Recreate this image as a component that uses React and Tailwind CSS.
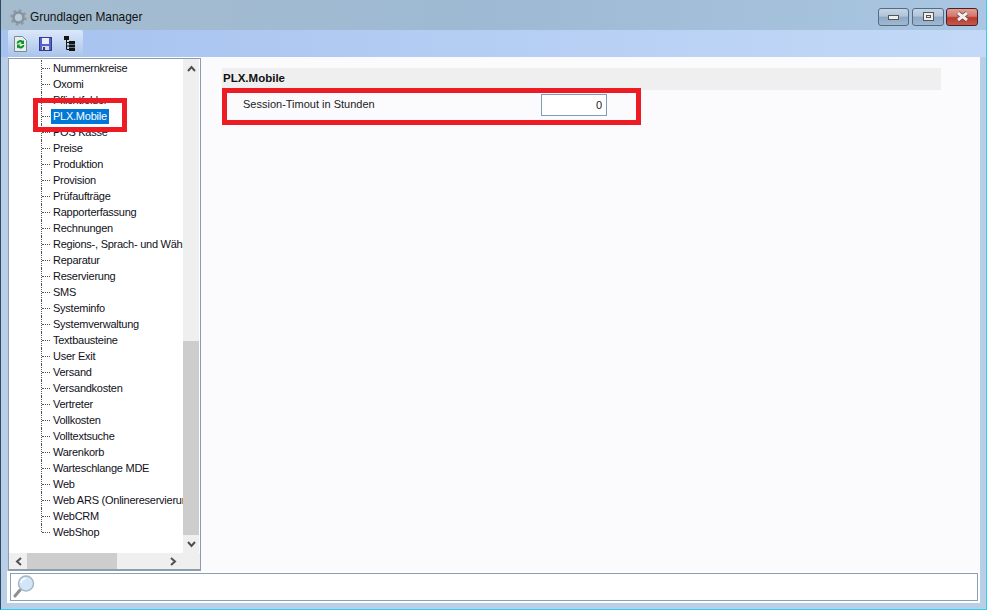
import React from "react";

const rows = [
  "Nummernkreise", "Oxomi", "Pflichtfelder", "PLX.Mobile", "POS Kasse", "Preise", "Produktion",
  "Provision", "Prüfaufträge", "Rapporterfassung", "Rechnungen", "Regions-, Sprach- und Währungen",
  "Reparatur", "Reservierung", "SMS", "Systeminfo", "Systemverwaltung", "Textbausteine", "User Exit",
  "Versand", "Versandkosten", "Vertreter", "Vollkosten", "Volltextsuche", "Warenkorb",
  "Warteschlange MDE", "Web", "Web ARS (Onlinereservierung)", "WebCRM", "WebShop",
];

const Gear = () => (
  <svg width="17" height="17" viewBox="0 0 17 17">
    <circle cx="8.500" cy="8.500" r="7" fill="none" stroke="#8f9ba7" strokeWidth="2.500" strokeDasharray="2.750 2.750" />
    <circle cx="8.500" cy="8.500" r="5" fill="none" stroke="#87939f" strokeWidth="2.500" />
    <circle cx="8.500" cy="8.500" r="3.500" fill="#bccbda" />
  </svg>
);

const RefreshIcon = () => (
  <svg width="13" height="16" viewBox="0 0 13 16">
    <path d="M.5.5h8l4 4v11H.5z" fill="#e6eff0" stroke="#7b8a90" />
    <path d="M2.500 7.500a4 4 0 0 1 6.500-2.500l1-1v4H6.500l1.200-1.200a2.200 2.200 0 0 0-3.400.700z" fill="#0f9424" />
    <path d="M10.500 9a4 4 0 0 1-6.500 2.500l-1 1v-4h3.500l-1.200 1.200a2.200 2.200 0 0 0 3.400-.700z" fill="#0f9424" />
  </svg>
);

const SaveIcon = () => (
  <svg width="13" height="14" viewBox="0 0 13 14">
    <rect x="0.500" y="0.500" width="12" height="13" fill="#5560d0" stroke="#343a86" />
    <rect x="3" y="1" width="7" height="6" fill="#eaeef8" />
    <rect x="3" y="9" width="7" height="4" fill="#d6d9e4" />
    <rect x="4" y="10" width="2" height="3" fill="#343a86" />
  </svg>
);

const TreeIcon = () => (
  <svg width="11" height="15" viewBox="0 0 11 15">
    <rect x="0" y="0" width="5" height="4" fill="#141414" />
    <path d="M2.500 4v9.500M2.500 6.500h3M2.500 10h3M2.500 13.500h3" stroke="#141414" fill="none" />
    <rect x="5" y="5" width="6" height="3" fill="#141414" />
    <rect x="5" y="8.500" width="6" height="3" fill="#141414" />
    <rect x="5" y="12" width="6" height="3" fill="#141414" />
  </svg>
);

const CloseGlyph = () => (
  <svg width="15" height="11" viewBox="0 0 15 11">
    <path d="M3 2 12 9M12 2 3 9" stroke="#6b3a36" strokeWidth="4.500" />
    <path d="M3 2 12 9M12 2 3 9" stroke="#f0eeee" strokeWidth="3" />
  </svg>
);

const Chevron = ({ d }) => (
  <svg width="9" height="7" viewBox="0 0 9 7" className="shrink-0">
    <path d={d} fill="none" stroke="#505050" strokeWidth="2" />
  </svg>
);

const Magnifier = () => (
  <svg width="24" height="24" viewBox="0 0 24 24">
    <path d="M7 15 2 21" stroke="#8f8f8f" strokeWidth="3" strokeLinecap="round" />
    <circle cx="13" cy="8.500" r="7.500" fill="#d3e6f8" stroke="#a3b7c9" strokeWidth="1.500" />
    <path d="M8 8a5 5 0 0 1 5-4.500" stroke="#ffffff" strokeWidth="1.500" fill="none" />
  </svg>
);

const App = () => {
  return (
    <div
      className="relative h-[610px] w-[987px] overflow-hidden border-r border-b border-l border-r-[#2bd3f3] border-b-[#2bd3f3] border-l-[#2f4a63] bg-[#b9cfe8] text-[11px] text-black"
      style={{ fontFamily: '"Liberation Sans", Arial, sans-serif' }}
    >
      {/* title bar */}
      <div className="flex h-[30px] items-center justify-between bg-gradient-to-r from-[#a5bccf] via-[#9db9d3] to-[#a9c6e2] pl-[9px] pr-[8px]">
        <div className="flex items-center gap-[3px] pt-[6px]">
          <Gear />
          <span className="text-[11.900px] text-[#111]">Grundlagen Manager</span>
        </div>
        <div className="flex items-center pt-[6px] pb-[3px]">
          <div className="flex h-[18px] w-[31px] items-center justify-center rounded-[3px] border border-[#566a82] bg-[linear-gradient(#c5d5e6_0%,#b0c5da_45%,#8fa9c5_50%,#a0b8d2_100%)]">
            <div className="mt-[2px] h-[5px] w-[11px] border border-[#555] bg-[#eee]" />
          </div>
          <div className="ml-[3px] flex h-[18px] w-[32px] items-center justify-center rounded-[3px] border border-[#566a82] bg-[linear-gradient(#c5d5e6_0%,#b0c5da_45%,#8fa9c5_50%,#a0b8d2_100%)]">
            <div className="flex h-[9px] w-[11px] items-center justify-center border border-[#555] bg-[#eee]">
              <div className="h-[3px] w-[5px] border border-[#555]" />
            </div>
          </div>
          <div className="ml-[2px] flex h-[18px] w-[32px] items-center justify-center rounded-[3px] border border-[#4a2030] bg-[linear-gradient(#e0a095_0%,#d4766a_45%,#b8392c_55%,#c8584c_100%)]">
            <CloseGlyph />
          </div>
        </div>
      </div>

      {/* toolbar */}
      <div className="flex h-[27px] bg-gradient-to-r from-[#a6c2ef] to-[#c3d9f7] pl-[7px]">
        <div className="flex h-[27px] w-[75px] items-center rounded-t-[2px] bg-gradient-to-b from-[#dbe8fa] to-[#a9c3ea] pl-[6px]">
          <RefreshIcon />
          <div className="ml-[12px]">
            <SaveIcon />
          </div>
          <div className="ml-[12px]">
            <TreeIcon />
          </div>
        </div>
      </div>

      <div className="mr-[6px] ml-[6px] flex h-[546px] flex-col bg-white">
        {/* main */}
        <div className="flex h-[514px]">
          <div className="h-full w-[1px] bg-[#b9cfe8]" />
          <div className="mt-[1px] flex h-[513px] w-[193px] shrink-0 flex-col border border-b-2 border-[#8d9dae] bg-white">
            <div className="flex h-[494px]">
              <div className="h-full w-[174px] overflow-hidden pl-[32px] pt-[1px]">
                {rows.map((r, i) => (
                  <div key={r} className="flex h-[16px] items-center overflow-hidden whitespace-nowrap">
                    <div className="relative h-[16px] w-[10px] shrink-0">
                      <div className={`absolute left-0 top-0 w-0 border-l border-dotted border-[#555] ${i === rows.length - 1 ? "h-[8px]" : "h-[16px]"}`} />
                      <div className="absolute left-[1px] top-[8px] h-0 w-[8px] border-t border-dotted border-[#555]" />
                    </div>
                    <span className={`px-[2px] leading-[15px] tracking-[-0.25px] ${r === "PLX.Mobile" ? "bg-[#0078d7] text-white" : "text-[#101020]"}`}>
                      {r}
                    </span>
                  </div>
                ))}
              </div>
              <div className="flex w-[16px] flex-col items-center bg-[#efefef]">
                <div className="flex h-[18px] items-center justify-center">
                  <Chevron d="M1 6 4.500 2 8 6" />
                </div>
                <div className="h-[264px]" />
                <div className="h-[194px] w-full bg-[#cdcdcd]" />
                <div className="flex h-[18px] items-center justify-center">
                  <Chevron d="M1 1 4.500 5 8 1" />
                </div>
              </div>
            </div>
            <div className="flex h-[16px] items-center bg-[#efefef]">
              <div className="flex w-[18px] items-center justify-center">
                <svg width="7" height="9" viewBox="0 0 7 9"><path d="M6 1 2 4.500 6 8" fill="none" stroke="#505050" strokeWidth="2" /></svg>
              </div>
              <div className="h-full w-[90px] bg-[#cdcdcd]" />
              <div className="flex flex-1 items-center justify-end pr-[23px]">
                <svg width="7" height="9" viewBox="0 0 7 9"><path d="M1 1 5 4.500 1 8" fill="none" stroke="#505050" strokeWidth="2" /></svg>
              </div>
            </div>
          </div>

          {/* settings panel */}
          <div className="flex-1 bg-[#fbfbfe] pl-[21px] pt-[11px]">
            <div className="flex h-[22px] w-[719px] items-center bg-[#efefef] pl-[1px] text-[11.500px] font-bold text-[#111]">
              PLX.Mobile
            </div>
            <div className="flex h-[32px] w-[385px] items-start justify-between pl-[21px] pt-[4px]">
              <span className="leading-[20px] text-[#222]">Session-Timout in Stunden</span>
              <div className="flex h-[22px] w-[66px] items-center justify-end border border-[#7f9db9] bg-white pr-[4px] text-[#222]">
                0
              </div>
            </div>
          </div>
        </div>

        {/* search bar */}
        <div className="pl-[3px] pt-[2px]">
          <div className="flex h-[28px] w-[968px] items-center border border-[#88a0b8] bg-white pl-[2px]">
            <Magnifier />
          </div>
        </div>
      </div>

      {/* red annotation boxes */}
      <div className="absolute left-[32px] top-[98px] h-[34px] w-[94px] border-[5px] border-[#ed1c24]" />
      <div className="absolute left-[221px] top-[88px] h-[37px] w-[419px] border-[5px] border-[#ed1c24]" />
    </div>
  );
};

export default App;
